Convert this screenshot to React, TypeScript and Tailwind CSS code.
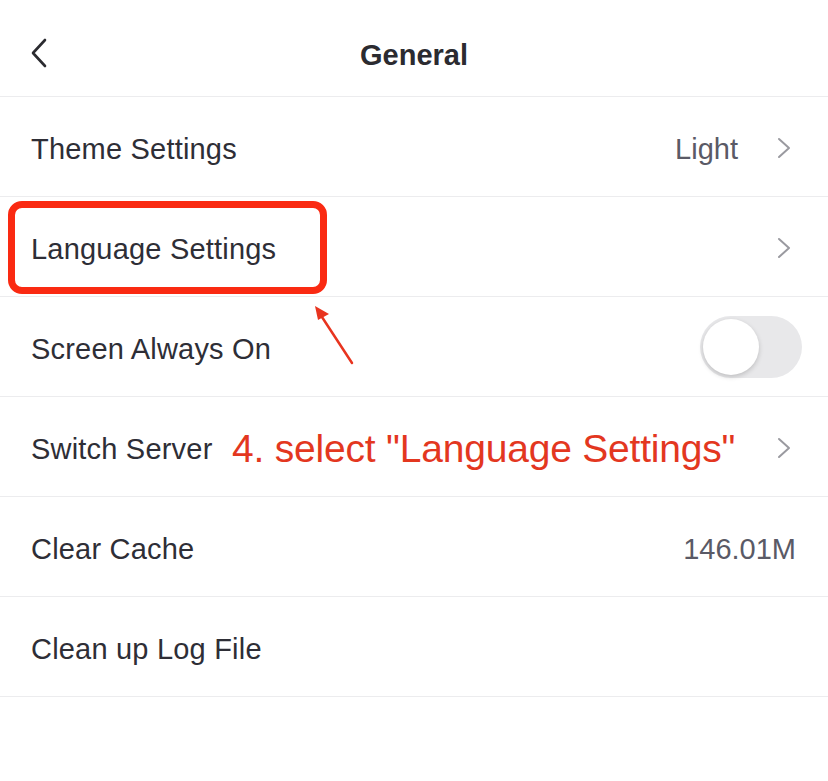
import { ReactNode } from 'react'

const font = { fontFamily: '"Liberation Sans", Arial, sans-serif' }

function Chevron() {
  return (
    <svg width="16" height="24" viewBox="0 0 16 24" fill="none" className="shrink-0 -mt-[4px]">
      <path d="M3 3 L13 12 L3 21" stroke="#9a9aa0" strokeWidth="2" strokeLinecap="round" strokeLinejoin="round" />
    </svg>
  )
}

function Row({ label, right, chevron }: { label: string; right?: ReactNode; chevron?: boolean }) {
  return (
    <div className="h-[100px] flex items-center justify-between pt-[6px] pl-[31px] pr-[36px] border-b border-[#ececee]">
      <span className="text-[29px] text-[#2e2e36] tracking-[0.2px]">{label}</span>
      <div className="flex items-center gap-[38px]">
        {right}
        {chevron && <Chevron />}
      </div>
    </div>
  )
}

export default function App() {
  return (
    <div className="w-[828px] h-[781px] bg-white relative overflow-hidden" style={font}>
      {/* header */}
      <div className="h-[97px] flex items-center justify-center relative border-b border-[#ececee]">
        <svg width="22" height="30" viewBox="0 0 22 30" fill="none" className="absolute left-[28px] top-[38px]">
          <path d="M17 2 L5 15 L17 28" stroke="#2b2b30" strokeWidth="2.6" strokeLinecap="round" strokeLinejoin="round" />
        </svg>
        <span className="text-[29px] font-bold text-[#2b2b30] mt-[15px]">General</span>
      </div>

      <Row label="Theme Settings" right={<span className="text-[29px] text-[#5a5a66]">Light</span>} chevron />
      <Row label="Language Settings" chevron />
      <div className="h-[100px] flex items-center justify-between pl-[31px] pr-[26px] border-b border-[#ececee]">
        <span className="text-[29px] text-[#2e2e36] tracking-[0.2px] pt-[6px]">Screen Always On</span>
        <div className="w-[102px] h-[62px] rounded-full bg-[#e8e8ea] flex items-center pl-[3px]">
          <div className="w-[56px] h-[56px] rounded-full bg-white shadow-[0_2px_5px_rgba(0,0,0,0.18)]" />
        </div>
      </div>
      <Row label="Switch Server" chevron />
      <Row label="Clear Cache" right={<span className="text-[29px] text-[#5a5a66] -mr-[4px]">146.01M</span>} />
      <Row label="Clean up Log File" />

      {/* annotations */}
      <div className="absolute left-[8px] top-[201px] w-[319px] h-[93px] border-[7px] border-[#fa2a12] rounded-[14px]" />
      <svg width="60" height="70" viewBox="0 0 60 70" className="absolute left-[305px] top-[300px]" fill="none">
        <path d="M47 63 L15 14" stroke="#e8341f" strokeWidth="2.5" strokeLinecap="round" />
        <path d="M10 6 L24 14 L13 20 Z" fill="#e8341f" />
      </svg>
      <span className="absolute left-[232px] top-[420px] text-[39px] text-[#e3371f] tracking-[-0.2px]">
        4. select "Language Settings"
      </span>
    </div>
  )
}
